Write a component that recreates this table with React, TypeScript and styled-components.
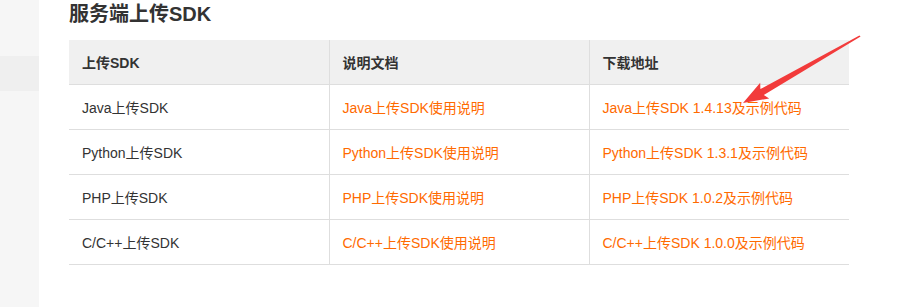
import React from 'react';
import styled, { createGlobalStyle } from 'styled-components';

const GlobalStyle = createGlobalStyle`
  html, body {
    margin: 0;
    padding: 0;
    background: #fff;
    font-family: "Liberation Sans", "Noto Sans CJK SC", sans-serif;
    color: #333;
  }
`;

const Page = styled.div`
  position: relative;
  display: flex;
  width: 897px;
  height: 307px;
  overflow: hidden;
`;

const Sidebar = styled.aside`
  width: 39px;
  flex-shrink: 0;
  background: #f6f6f6;
  padding-top: 56px;
  box-sizing: border-box;
`;

const SideItem = styled.div`
  height: 35px;
  background: #efefef;
`;

const Main = styled.main`
  flex: 1;
  padding-left: 30px;
`;

const Title = styled.h2`
  margin: 0;
  height: 40px;
  font-size: 20px;
  line-height: 28px;
  font-weight: bold;
  color: #333;
`;

const Table = styled.table`
  width: 780px;
  border-collapse: collapse;
  table-layout: fixed;
  font-size: 14px;
`;

const HeadCell = styled.th`
  height: 44px;
  padding: 0 13px;
  background: #f0f0f0;
  text-align: left;
  font-weight: bold;
  color: #333;
  border-bottom: 1px solid #dedede;
  & + & {
    border-left: 1px solid #dedede;
  }
`;

const Cell = styled.td<{ $link?: boolean }>`
  height: 44px;
  padding: 0 13px;
  color: ${p => (p.$link ? '#ff6a00' : '#333')};
  border-bottom: 1px solid #dedede;
  white-space: nowrap;
  & + & {
    border-left: 1px solid #dedede;
  }
`;

const Arrow = styled.svg`
  position: absolute;
  left: 0;
  top: 0;
  pointer-events: none;
`;

const rows = [
  ['Java上传SDK', 'Java上传SDK使用说明', 'Java上传SDK 1.4.13及示例代码'],
  ['Python上传SDK', 'Python上传SDK使用说明', 'Python上传SDK 1.3.1及示例代码'],
  ['PHP上传SDK', 'PHP上传SDK使用说明', 'PHP上传SDK 1.0.2及示例代码'],
  ['C/C++上传SDK', 'C/C++上传SDK使用说明', 'C/C++上传SDK 1.0.0及示例代码'],
];

const App = () => (
  <Page>
    <GlobalStyle />
    <Sidebar>
      <SideItem />
    </Sidebar>
    <Main>
      <Title>服务端上传SDK</Title>
      <Table>
        <thead>
          <tr>
            <HeadCell>上传SDK</HeadCell>
            <HeadCell>说明文档</HeadCell>
            <HeadCell>下载地址</HeadCell>
          </tr>
        </thead>
        <tbody>
          {rows.map(r => (
            <tr key={r[0]}>
              <Cell>{r[0]}</Cell>
              <Cell $link>{r[1]}</Cell>
              <Cell $link>{r[2]}</Cell>
            </tr>
          ))}
        </tbody>
      </Table>
    </Main>
    <Arrow width="897" height="307" viewBox="0 0 897 307">
      <polygon
        points="860.6,36.4 763.8,95.1 769.2,98.4 743,103 760.2,82.8 760.4,89.1 859.4,35.6"
        fill="#f23b3b"
      />
    </Arrow>
  </Page>
);

export default App;
